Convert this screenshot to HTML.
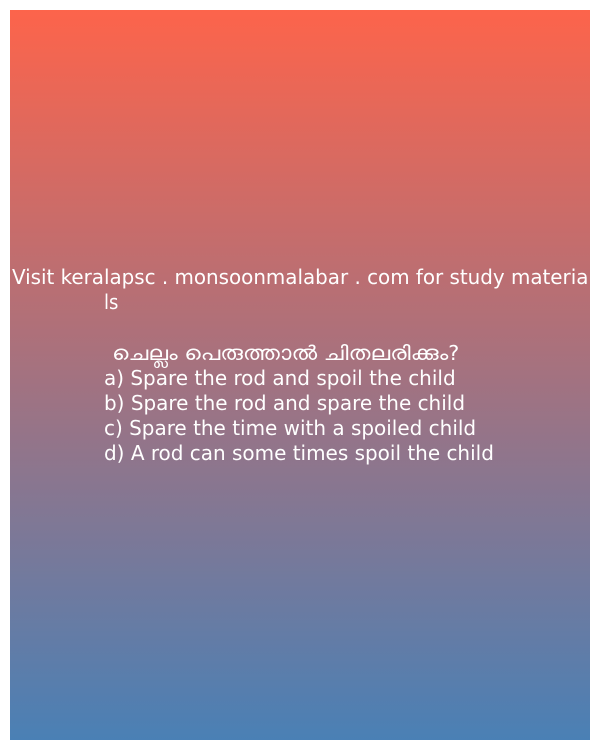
<!DOCTYPE html>
<html><head><meta charset="utf-8"><style>
html,body{margin:0;padding:0;background:#fff;width:600px;height:750px;overflow:hidden}
.box{position:absolute;left:10px;top:10px;width:580px;height:730px;background:linear-gradient(#fd644b,#4a80b5)}
.t{position:absolute;color:#fff;font-family:"DejaVu Sans Condensed","DejaVu Sans","Liberation Sans",sans-serif;font-stretch:condensed;font-size:20px;line-height:25px;white-space:nowrap;transform-origin:0 50%}
</style></head><body>
<div class="box"></div>
<div class="t" style="left:12px;top:265px;transform:scaleX(1.105)">Visit keralapsc . monsoonmalabar . com for study materia</div>
<div class="t" style="left:104px;top:290px">ls</div>
<div class="t" style="left:112px;top:341px;transform:scaleX(1.15)">ചെല്ലം പെരുത്താൽ ചിതലരിക്കും?</div>
<div class="t" style="left:104px;top:366px;transform:scaleX(1.11)">a) Spare the rod and spoil the child</div>
<div class="t" style="left:104px;top:391px;transform:scaleX(1.11)">b) Spare the rod and spare the child</div>
<div class="t" style="left:104px;top:416px;transform:scaleX(1.11)">c) Spare the time with a spoiled child</div>
<div class="t" style="left:104px;top:441px;transform:scaleX(1.11)">d) A rod can some times spoil the child</div>
</body></html>
